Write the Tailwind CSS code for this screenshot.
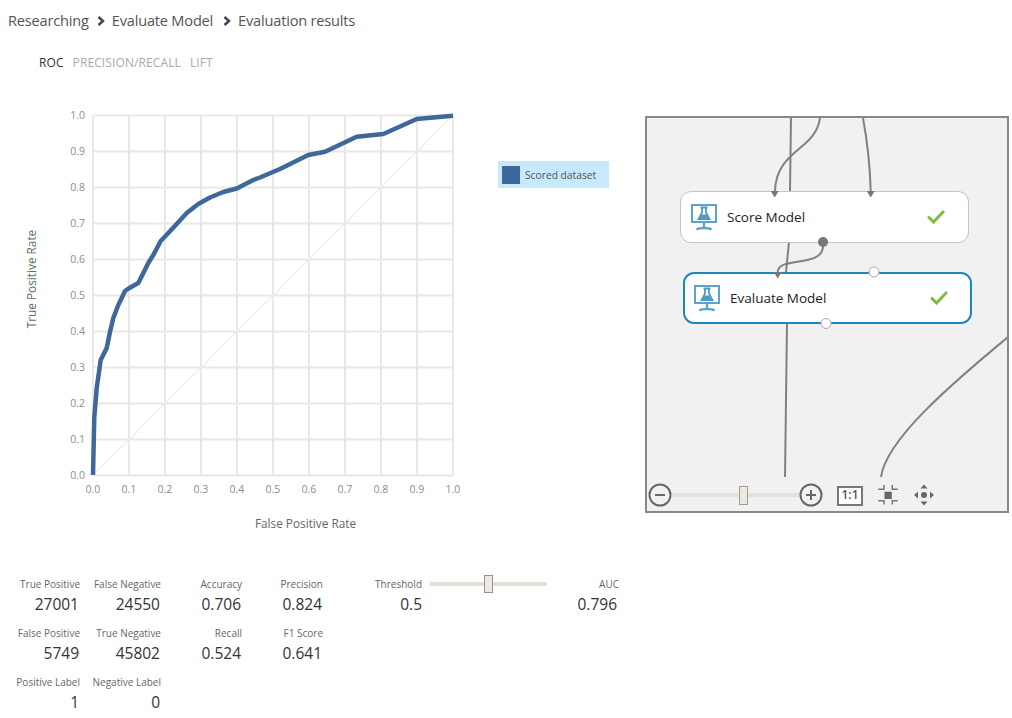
<!DOCTYPE html>
<html lang="en">
  <head>
    <meta charset="UTF-8" />
    <title>Evaluation results</title>
    <script src="https://cdn.jsdelivr.net/npm/@tailwindcss/browser@4"></script>
  </head>
  <body class="bg-white font-['Open_Sans','Noto_Sans',sans-serif]">
    <main class="w-[1012px] h-[718px] overflow-hidden">
      <!-- breadcrumb -->
      <nav class="h-[42px] flex items-center pl-2 text-[14.6px] text-[#555] tracking-[-0.2px]">
        <span>Researching</span>
        <svg class="ml-[8px] mr-[6px]" width="9" height="10" viewBox="0 0 9 10"><path d="M1.5 1 L6 5 L1.5 9" fill="none" stroke="#444" stroke-width="2.4" /></svg>
        <span>Evaluate Model</span>
        <svg class="ml-[10px] mr-[6px]" width="9" height="10" viewBox="0 0 9 10"><path d="M1.5 1 L6 5 L1.5 9" fill="none" stroke="#444" stroke-width="2.4" /></svg>
        <span>Evaluation results</span>
      </nav>

      <!-- tabs -->
      <div class="h-[40px] pt-[2px] flex items-center gap-[9px] pl-[39px] text-[12px] tracking-[0.1px] text-[#aaa]">
        <span class="text-[#333]">ROC</span>
        <span>PRECISION/RECALL</span>
        <span>LIFT</span>
      </div>

      <div class="flex h-[460px]">
        <!-- roc chart -->
        <svg class="shrink-0" width="498" height="460" viewBox="0 82 498 460" font-size="10.5" fill="#8c8c8c">
          <g stroke="#e8e8e8" stroke-width="2">
            <path d="M93 115.5H453M93 151.5H453M93 187.5H453M93 223.5H453M93 259.5H453M93 295.5H453M93 331.5H453M93 367.5H453M93 403.5H453M93 439.5H453M93 475.5H453" />
            <path d="M93 115.5V475.5M129 115.5V475.5M165 115.5V475.5M201 115.5V475.5M237 115.5V475.5M273 115.5V475.5M309 115.5V475.5M345 115.5V475.5M381 115.5V475.5M417 115.5V475.5M453 115.5V475.5" />
          </g>
          <path d="M93 475.5L453 115.5" stroke="#eeeeee" stroke-width="1.5" />
          <polyline fill="none" stroke="#3d6899" stroke-width="4.5" stroke-linejoin="round"
            points="93,475 94.3,417 96.7,388 100.7,360 106.7,348 110,332 113.3,318 118.3,305 121.7,298 125,291 129.3,288 138.3,283 148.3,263 153.3,255 160.7,241 168.3,233 176.7,224 186.7,213 198.3,204 210,197.5 223.3,192 236.7,188.5 253.3,180 260,177.5 280,169 308.3,155 325,151.7 356.7,136.7 383.3,134 416.7,119 453,115.7" />
          <g text-anchor="end">
            <text x="85" y="119">1.0</text>
            <text x="85" y="155">0.9</text>
            <text x="85" y="191">0.8</text>
            <text x="85" y="227">0.7</text>
            <text x="85" y="263">0.6</text>
            <text x="85" y="299">0.5</text>
            <text x="85" y="335">0.4</text>
            <text x="85" y="371">0.3</text>
            <text x="85" y="407">0.2</text>
            <text x="85" y="443">0.1</text>
            <text x="85" y="479">0.0</text>
          </g>
          <g text-anchor="middle">
            <text x="93" y="493">0.0</text>
            <text x="129" y="493">0.1</text>
            <text x="165" y="493">0.2</text>
            <text x="201" y="493">0.3</text>
            <text x="237" y="493">0.4</text>
            <text x="273" y="493">0.5</text>
            <text x="309" y="493">0.6</text>
            <text x="345" y="493">0.7</text>
            <text x="381" y="493">0.8</text>
            <text x="417" y="493">0.9</text>
            <text x="453" y="493">1.0</text>
            <text x="305.5" y="528" font-size="11.8" fill="#666">False Positive Rate</text>
            <text transform="translate(36 279) rotate(-90)" font-size="11.8" fill="#5a6e5a">True Positive Rate</text>
          </g>
        </svg>

        <!-- legend -->
        <div class="shrink-0 w-[111px] h-[27px] mt-[79px] bg-[#c6eafc] flex items-center pl-[4px] gap-[5px] text-[10.25px] text-[#555]">
          <span class="w-[18px] h-[18px] bg-[#3d6899]"></span>
          <span class="mt-[3px]">Scored dataset</span>
        </div>

        <!-- experiment canvas -->
        <div class="relative shrink-0 ml-[36px] mt-[34px] w-[364px] h-[397px] border-2 border-[#888] bg-[#f1f1f1] overflow-hidden">
          <svg class="absolute left-0 top-0" width="360" height="393" viewBox="647 118 360 393" fill="none" stroke="#808080" stroke-width="2">
            <path d="M791 118L790 191M789 242L786 272M787 324L785 477" />
            <path d="M820 118C816 150 776 150 775 191" />
            <path d="M863 118C868 145 870 165 870.7 191" />
            <path d="M823 246C823 268 778 256 777.7 272" />
            <path d="M1008 337C950 385 886 440 881 477" />
          </svg>

          <!-- score model node -->
          <div class="absolute left-[33px] top-[73px] w-[289px] h-[52px] rounded-[11px] border border-[#c4c4c4] bg-white flex items-center pl-[10px] text-[13.5px] text-[#222]">
            <svg width="26" height="27" viewBox="0 0 26 27" class="mr-[10px]">
              <rect x="1" y="1" width="24" height="17" fill="none" stroke="#5ba3cb" stroke-width="2" />
              <path d="M9.500 3.500H16.500M11 3.500V8.500L7.500 15H18.500L15 8.500V3.500" fill="none" stroke="#4f9cc6" stroke-width="1.800" />
              <path d="M10.200 10.500H15.800L18.500 15.500H7.500Z" fill="#4f9cc6" />
              <path d="M13 18V24M5.500 25.500C8 23.500 18 23.500 20.500 25.500" fill="none" stroke="#5ba3cb" stroke-width="2.400" />
            </svg>
            <span>Score Model</span>
            <svg class="absolute left-[246px] top-[17px]" width="18" height="15" viewBox="0 0 18 15"><path d="M1 7.500L6.500 13L17 2" fill="none" stroke="#7fba42" stroke-width="3" /></svg>
          </div>

          <!-- evaluate model node -->
          <div class="absolute left-[36px] top-[154px] w-[289px] h-[52px] rounded-[11px] border-2 border-[#1f87bf] bg-white flex items-center pl-[9px] text-[13.5px] text-[#222]">
            <svg width="26" height="27" viewBox="0 0 26 27" class="mr-[10px]">
              <rect x="1" y="1" width="24" height="17" fill="none" stroke="#5ba3cb" stroke-width="2" />
              <path d="M9.500 3.500H16.500M11 3.500V8.500L7.500 15H18.500L15 8.500V3.500" fill="none" stroke="#4f9cc6" stroke-width="1.800" />
              <path d="M10.200 10.500H15.800L18.500 15.500H7.500Z" fill="#4f9cc6" />
              <path d="M13 18V24M5.500 25.500C8 23.500 18 23.500 20.500 25.500" fill="none" stroke="#5ba3cb" stroke-width="2.400" />
            </svg>
            <span>Evaluate Model</span>
            <svg class="absolute left-[245px] top-[16px]" width="18" height="15" viewBox="0 0 18 15"><path d="M1 7.500L6.500 13L17 2" fill="none" stroke="#7fba42" stroke-width="3" /></svg>
          </div>

          <!-- ports and arrowheads -->
          <svg class="absolute left-0 top-0" width="360" height="393" viewBox="647 118 360 393">
            <path d="M770.700 191H778.700L774.700 197.500Z M866.700 191H874.700L870.700 197.500Z M773.700 272H781.700L777.700 278.500Z" fill="#777" />
            <circle cx="823" cy="242" r="5" fill="#777" />
            <circle cx="874" cy="272" r="5" fill="#fff" stroke="#aaa" />
            <circle cx="826" cy="323.500" r="5" fill="#fff" stroke="#aaa" />
          </svg>

          <!-- zoom toolbar -->
          <svg class="absolute left-0 top-0" width="360" height="393" viewBox="647 118 360 393" fill="none" stroke="#666">
            <rect x="672" y="493" width="128" height="4" fill="#e6e2da" stroke="none" />
            <rect x="739.500" y="486.500" width="8" height="18" fill="#ece9e4" stroke="#a09a90" />
            <circle cx="660" cy="495" r="10.500" fill="#f1f1f1" stroke-width="2" />
            <path d="M655 495H665" stroke-width="2" />
            <circle cx="811" cy="495" r="10.500" fill="#f1f1f1" stroke-width="2" />
            <path d="M806 495H816M811 490V500" stroke-width="2" />
            <rect x="838" y="487" width="24" height="18" fill="#fff" stroke="#777" stroke-width="2" />
            <path d="M878.300 489.300H884V485M892.300 485V489.300H897.700M878.300 500.700H884V504.500M892.300 504.500V500.700H897.700" stroke="#777" stroke-width="1.500" />
            <rect x="884.500" y="491.700" width="7.300" height="7.300" fill="#666" stroke="none" />
            <path d="M924 484.500L920.500 488.500H927.500Z M924 505.500L920.500 501.500H927.500Z M914 495L918 491.500V498.500Z M934 495L930 491.500V498.500Z" fill="#666" stroke="none" />
            <circle cx="924" cy="495" r="3" fill="#666" stroke="none" />
          </svg>
          <span class="absolute left-[191px] top-[370px] w-[24px] text-center text-[12px] leading-[14px] font-semibold text-[#555]">1:1</span>
        </div>
      </div>

      <!-- metrics -->
      <section class="mt-[34px] grid grid-cols-[81px_81px_81px_81px_98px_125px_72px] grid-rows-[49px_49px_49px] w-fit text-right">
        <div class="pr-px"><p class="h-4 leading-4 text-[10px] text-[#666] whitespace-nowrap">True Positive</p><p class="h-[24px] leading-[24px] text-[15.5px] text-[#333] pr-px">27001</p></div>
        <div class="pr-px"><p class="h-4 leading-4 text-[10px] text-[#666] whitespace-nowrap">False Negative</p><p class="h-[24px] leading-[24px] text-[15.5px] text-[#333] pr-px">24550</p></div>
        <div class="pr-px"><p class="h-4 leading-4 text-[10px] text-[#666] whitespace-nowrap">Accuracy</p><p class="h-[24px] leading-[24px] text-[15.5px] text-[#333] pr-px">0.706</p></div>
        <div class="pr-px"><p class="h-4 leading-4 text-[10px] text-[#666] whitespace-nowrap">Precision</p><p class="h-[24px] leading-[24px] text-[15.5px] text-[#333] pr-px">0.824</p></div>
        <div><p class="h-4 leading-4 text-[10px] text-[#666] whitespace-nowrap">Threshold</p><p class="h-[24px] leading-[24px] text-[15.5px] text-[#333]">0.5</p></div>
        <div class="pl-2 pr-0">
          <div class="relative w-[117px] h-1 mt-[6px] bg-[#e3dfd8]">
            <span class="absolute left-[54px] top-[-7px] w-[9px] h-[18px] border border-[#9a9289] bg-[#ece9e4]"></span>
          </div>
        </div>
        <div><p class="h-4 leading-4 text-[10px] text-[#666] whitespace-nowrap">AUC</p><p class="h-[24px] leading-[24px] text-[15.5px] text-[#333] pr-[2px]">0.796</p></div>

        <div class="col-start-1 pr-px"><p class="h-4 leading-4 text-[10px] text-[#666] whitespace-nowrap">False Positive</p><p class="h-[24px] leading-[24px] text-[15.5px] text-[#333] pr-px">5749</p></div>
        <div class="pr-px"><p class="h-4 leading-4 text-[10px] text-[#666] whitespace-nowrap">True Negative</p><p class="h-[24px] leading-[24px] text-[15.5px] text-[#333] pr-px">45802</p></div>
        <div class="pr-px"><p class="h-4 leading-4 text-[10px] text-[#666] whitespace-nowrap">Recall</p><p class="h-[24px] leading-[24px] text-[15.5px] text-[#333] pr-px">0.524</p></div>
        <div class="pr-px"><p class="h-4 leading-4 text-[10px] text-[#666] whitespace-nowrap">F1 Score</p><p class="h-[24px] leading-[24px] text-[15.5px] text-[#333] pr-px">0.641</p></div>

        <div class="col-start-1 pr-px"><p class="h-4 leading-4 text-[10px] text-[#666] whitespace-nowrap">Positive Label</p><p class="h-[24px] leading-[24px] text-[15.5px] text-[#333] pr-px">1</p></div>
        <div class="pr-px"><p class="h-4 leading-4 text-[10px] text-[#666] whitespace-nowrap">Negative Label</p><p class="h-[24px] leading-[24px] text-[15.5px] text-[#333] pr-px">0</p></div>
      </section>
    </main>
  </body>
</html>
